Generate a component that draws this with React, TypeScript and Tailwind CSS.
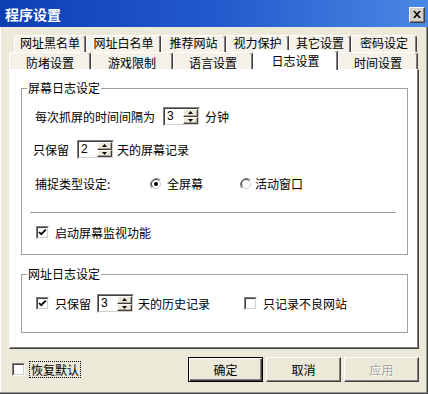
import type { ReactNode } from "react";

function Check({ checked }: { checked?: boolean }) {
  return (
    <span className="w-[13px] h-[13px] shrink-0 border border-t-[#808080] border-l-[#808080] border-r-white border-b-white">
      <span className="flex w-full h-full items-center justify-center bg-white border border-t-[#404040] border-l-[#404040] border-r-[#d4d0c8] border-b-[#d4d0c8]">
        {checked && (
          <svg width="9" height="9" viewBox="0 0 9 9">
            <path d="M1 4l2.2 2.2L7.8 1.6" stroke="#000" strokeWidth="1.7" fill="none" />
          </svg>
        )}
      </span>
    </span>
  );
}

function Radio({ checked }: { checked?: boolean }) {
  return (
    <svg width="12" height="12" viewBox="0 0 12 12" className="shrink-0">
      <circle cx="6" cy="6" r="5.5" fill="#fff" />
      <path d="M1.8 10.2A6 6 0 0 1 10.2 1.8" stroke="#808080" fill="none" />
      <path d="M2.8 9.2A4.5 4.5 0 0 1 9.2 2.8" stroke="#404040" fill="none" />
      <path d="M9.2 2.8A4.5 4.5 0 0 1 2.8 9.2" stroke="#d4d0c8" fill="none" />
      {checked && <circle cx="6" cy="6" r="2" fill="#000" />}
    </svg>
  );
}

function Spin({ value }: { value: string }) {
  return (
    <div className="flex h-[19px] w-[37px] shrink-0 border border-t-[#808080] border-l-[#808080] border-r-white border-b-white">
      <div className="flex flex-1 border border-t-[#404040] border-l-[#404040] border-r-[#d4d0c8] border-b-[#d4d0c8] bg-white">
        <div className="flex-1 pl-[2px] text-[12px] leading-[15px] font-['Liberation_Sans',sans-serif]">{value}</div>
        <div className="flex flex-col w-[15px]">
          {[0, 1].map((i) => (
            <div
              key={i}
              className="flex flex-1 items-center justify-center bg-[#ece9d8] border border-t-white border-l-white border-r-[#404040] border-b-[#404040] shadow-[inset_-1px_-1px_0_#aca899]"
            >
              <svg width="5" height="3" viewBox="0 0 5 3">
                <path d={i === 0 ? "M0 3L2.5 0L5 3Z" : "M0 0L2.5 3L5 0Z"} fill="#000" />
              </svg>
            </div>
          ))}
        </div>
      </div>
    </div>
  );
}

function Group({ title, children, className }: { title: string; children: ReactNode; className: string }) {
  return (
    <fieldset className={`ml-[11px] w-[387px] border border-[#a0a0a0] ${className}`}>
      <legend className="ml-[5px] px-[1px] leading-[14px]">{title}</legend>
      {children}
    </fieldset>
  );
}

function Tab({ label, className, selected }: { label: string; className: string; selected?: boolean }) {
  if (selected) {
    return (
      <div
        className={`relative z-10 -mt-[2px] h-[20px] flex justify-center pt-[3px] bg-white border-t border-l border-white border-r border-r-[#404040] rounded-t-[3px] shadow-[inset_-1px_0_0_#808080] ${className}`}
      >
        {label}
      </div>
    );
  }
  return (
    <div
      className={`h-full flex justify-center bg-[#f3f1e8] border-t border-l border-white border-r border-r-[#404040] rounded-t-[3px] shadow-[inset_-1px_0_0_#808080] ${className}`}
    >
      {label}
    </div>
  );
}

function Button({ label, primary, disabled }: { label: string; primary?: boolean; disabled?: boolean }) {
  return (
    <div
      className={`w-[75px] h-[25px] flex items-center justify-center ${
        primary
          ? "border border-black shadow-[inset_1px_1px_0_#fff,inset_-1px_-1px_0_#404040,inset_-2px_-2px_0_#808080]"
          : "border border-t-white border-l-white border-r-[#404040] border-b-[#404040] shadow-[inset_-1px_-1px_0_#808080]"
      } ${disabled ? "text-[#a6a49a] [text-shadow:1px_1px_0_#fff]" : "text-black"}`}
    >
      {label}
    </div>
  );
}

export default function App() {
  return (
    <div className="w-[428px] h-[394px] flex flex-col bg-[#ece9d8] text-[12px] leading-[14px] text-black font-['Noto_Sans_CJK_SC',sans-serif] overflow-hidden shadow-[inset_-1px_-1px_0_#404040,inset_-2px_-2px_0_#9a988c,inset_1px_0_0_#fff]">
      {/* title bar */}
      <div className="h-[27px] shrink-0 flex items-center justify-between pl-[5px] pr-[3px] bg-linear-to-r from-[#0d3fb3] via-[#2259cc] to-[#4a88e4]">
        <span className="text-white text-[14px] font-bold leading-[16px] mt-[1px]">程序设置</span>
        <div className="w-[16px] h-[16px] mt-[2px] flex items-center justify-center bg-[#d4d0c8] border border-t-white border-l-white border-r-[#404040] border-b-[#404040] shadow-[inset_-1px_-1px_0_#808080]">
          <svg width="8" height="7" viewBox="0 0 8 7">
            <path d="M0 0h2l2 2.2L6 0h2L5 3.5 8 7H6L4 4.8 2 7H0l3-3.5z" fill="#000" />
          </svg>
        </div>
      </div>

      {/* tabs */}
      <div className="mt-[7px] ml-[9px] w-[410px]">
        <div className="flex h-[18px] pl-[5px] pt-[1px]">
          <Tab label="网址黑名单" className="w-[72px]" />
          <Tab label="网址白名单" className="w-[75px]" />
          <Tab label="推荐网站" className="w-[65px]" />
          <Tab label="视力保护" className="w-[63px]" />
          <Tab label="其它设置" className="w-[62px]" />
          <Tab label="密码设定" className="w-[66px]" />
        </div>
        <div className="flex items-start h-[17px] pt-0">
          <Tab label="防堵设置" className="w-[82px] pt-[3px]" />
          <Tab label="游戏限制" className="w-[82px] pt-[3px]" />
          <Tab label="语言设置" className="w-[80px] pt-[3px]" />
          <Tab label="日志设置" className="w-[85px]" selected />
          <Tab label="时间设置" className="w-[80px] pt-[3px]" />
        </div>

        {/* panel */}
        <div className="h-[280px] bg-white border-t border-l border-white border-r border-b border-r-[#404040] border-b-[#404040] shadow-[inset_-1px_-1px_0_#808080]">
          <Group title="屏幕日志设定" className="mt-[11px] pb-[15px]">
            <div className="mt-[12px] h-[19px] pl-[13px] flex items-center">
              <span>每次抓屏的时间间隔为</span>
              <div className="ml-[8px]">
                <Spin value="3" />
              </div>
              <span className="ml-[5px]">分钟</span>
            </div>
            <div className="mt-[14px] h-[19px] pl-[11px] flex items-center">
              <span>只保留</span>
              <div className="ml-[8px]">
                <Spin value="2" />
              </div>
              <span className="ml-[3px]">天的屏幕记录</span>
            </div>
            <div className="mt-[16px] h-[18px] pl-[13px] flex items-center">
              <span className="w-[115px]">捕捉类型设定:</span>
              <Radio checked />
              <span className="ml-[5px]">全屏幕</span>
              <span className="ml-[37px]">
                <Radio />
              </span>
              <span className="ml-[3px]">活动窗口</span>
            </div>
            <div className="mt-[19px] ml-[8px] w-[366px] h-px bg-[#a0a0a0]" />
            <div className="mt-[13px] h-[13px] pl-[14px] flex items-center">
              <Check checked />
              <span className="ml-[6px]">启动屏幕监视功能</span>
            </div>
          </Group>

          <Group title="网址日志设定" className="mt-[12px] pb-[19px]">
            <div className="mt-[13px] h-[19px] pl-[14px] flex items-center">
              <Check checked />
              <span className="ml-[6px]">只保留</span>
              <div className="ml-[6px]">
                <Spin value="3" />
              </div>
              <span className="ml-[4px]">天的历史记录</span>
              <span className="ml-[34px] flex">
                <Check />
              </span>
              <span className="ml-[6px]">只记录不良网站</span>
            </div>
          </Group>
        </div>
      </div>

      {/* bottom bar */}
      <div className="mt-[8px] h-[25px] flex items-center pl-[12px] pr-[9px]">
        <Check />
        <span className="ml-[4px] px-[1px] border border-dotted border-black leading-[15px]">恢复默认</span>
        <div className="ml-auto flex gap-[3px]">
          <Button label="确定" primary />
          <Button label="取消" />
          <Button label="应用" disabled />
        </div>
      </div>
    </div>
  );
}
